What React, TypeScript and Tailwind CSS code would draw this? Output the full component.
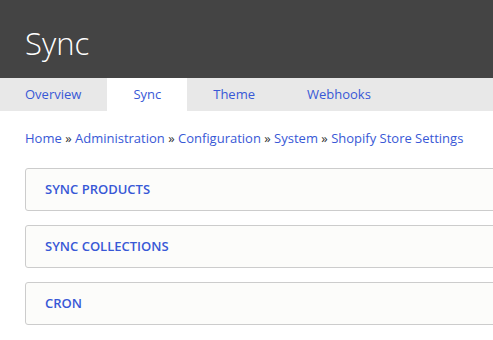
const tabs = ["Overview", "Sync", "Theme", "Webhooks"]
const crumbs = ["Home", "Administration", "Configuration", "System", "Shopify Store Settings"]
const sections = ["Sync products", "Sync collections", "Cron"]

const App = () => {
  return (
    <div className="min-h-screen bg-white font-['Open_Sans',sans-serif] overflow-hidden">
      <div className="bg-[#444444] h-[78px] flex items-center px-[25px] pt-[8px]">
        <h1 className="text-[31px] font-light text-white leading-none">Sync</h1>
      </div>

      <div className="bg-[#e8e8e8] h-[33px] flex -ml-[1px]">
        {tabs.map((t) => (
          <div
            key={t}
            className={`flex items-center px-[26px] text-[13px] text-[#3858d6] ${t === "Sync" ? "bg-white" : ""}`}
          >
            {t}
          </div>
        ))}
      </div>

      <div className="pl-[25px] pt-[18px] text-[13px] text-[#3858d6] whitespace-nowrap">
        {crumbs.map((c, i) => (
          <span key={c}>
            {i > 0 && <span className="text-[#333]"> » </span>}
            {c}
          </span>
        ))}
      </div>

      <div className="pl-[25px] mt-[19px] flex flex-col gap-[14px]">
        {sections.map((s) => (
          <div
            key={s}
            className="h-[43px] -mr-[4px] border border-[#cccccc] rounded-[3px] bg-[#fcfcfa] flex items-center px-[19px] pt-[1px]"
          >
            <span className="text-[13px] font-semibold uppercase text-[#3858d6]">{s}</span>
          </div>
        ))}
      </div>
    </div>
  )
}

export default App
